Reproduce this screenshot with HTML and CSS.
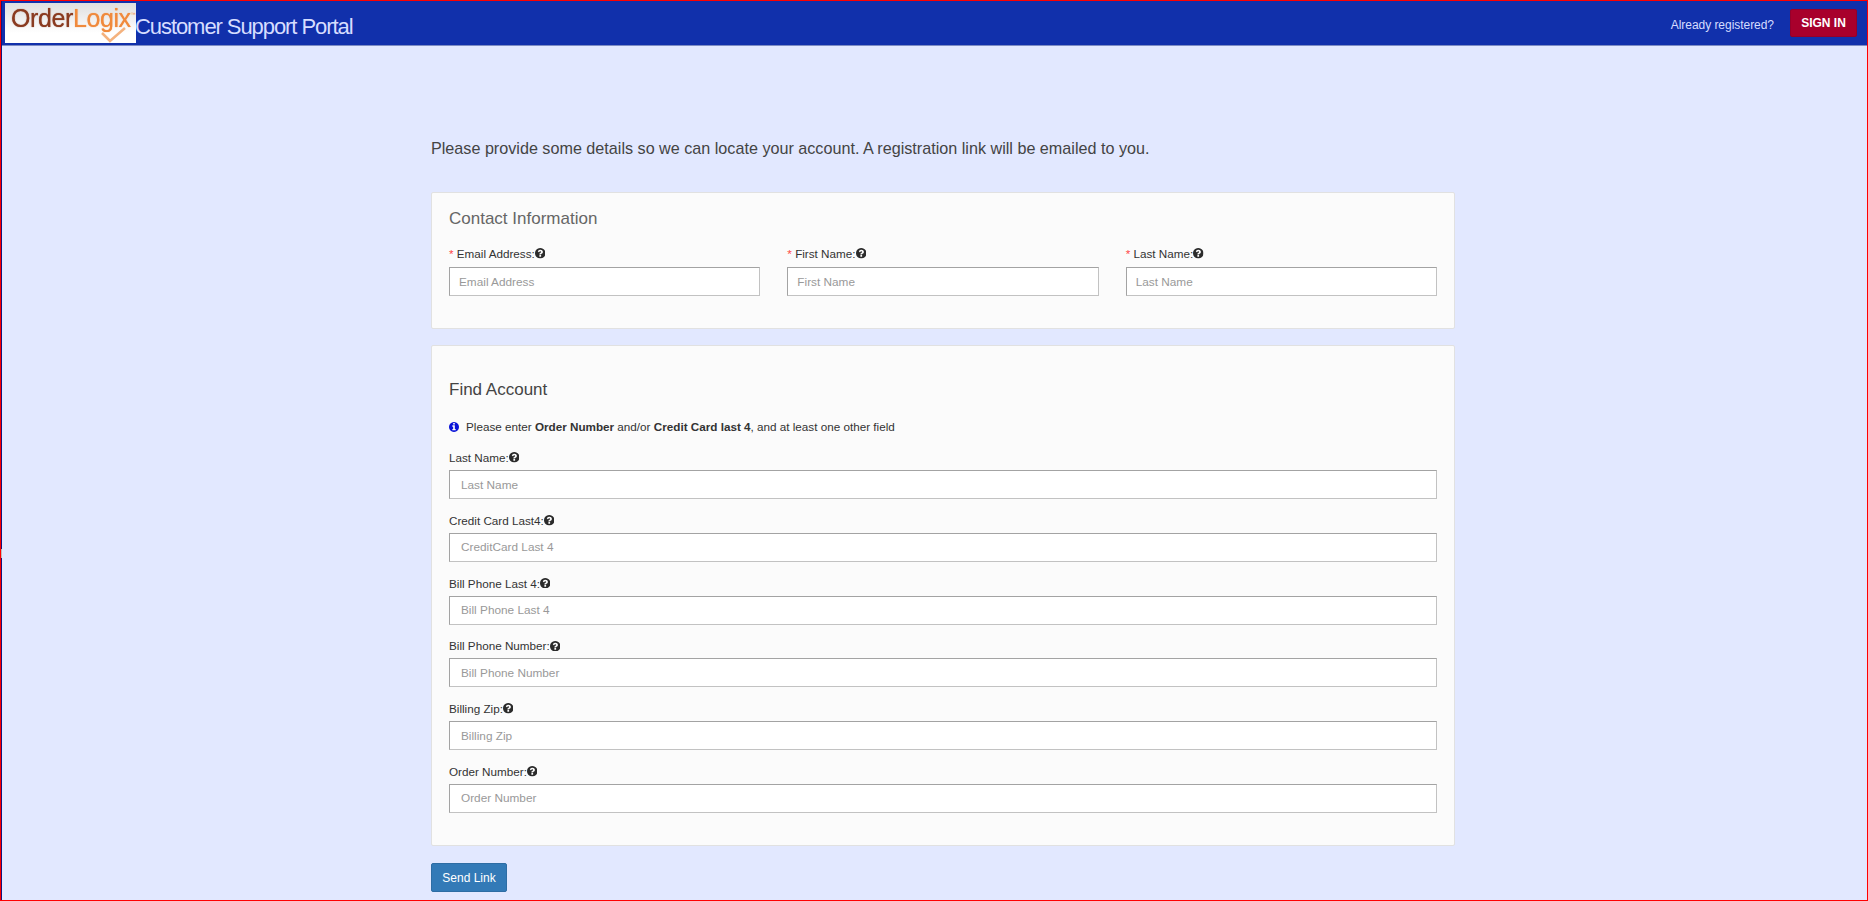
FILE: index.html
```html
<!DOCTYPE html>
<html lang="en">
<head>
<meta charset="utf-8">
<title>Customer Support Portal</title>
<link rel="stylesheet" href="styles.css">
</head>
<body>
<svg class="defs" width="0" height="0" aria-hidden="true">
  <symbol id="q" viewBox="128 128 1536 1536"><path d="M1024 1376v-192q0-14-9-23t-23-9h-192q-14 0-23 9t-9 23v192q0 14 9 23t23 9h192q14 0 23-9t9-23zm256-672q0-88-55.500-163t-138.500-116-170-41q-243 0-371 213-15 24 8 42l132 100q7 6 19 6 16 0 25-12 53-68 86-92 34-24 86-24 48 0 85.500 26t37.500 59q0 38-20 61t-68 45q-63 28-115.500 86.500t-52.500 125.500v36q0 14 9 23t23 9h192q14 0 23-9t9-23q0-19 21.500-49.500t54.500-49.500q32-18 49-28.500t46-35 44.500-48 28-60.500 12.500-81zm384 192q0 209-103 385.500t-279.500 279.500-385.500 103-385.500-103-279.500-279.500-103-385.500 103-385.500 279.500-279.500 385.500-103 385.500 103 279.500 279.500 103 385.500z"/></symbol>
  <symbol id="i" viewBox="128 128 1536 1536"><path d="M1152 1376v-160q0-14-9-23t-23-9h-96v-512q0-14-9-23t-23-9h-320q-14 0-23 9t-9 23v160q0 14 9 23t23 9h96v320h-96q-14 0-23 9t-9 23v160q0 14 9 23t23 9h448q14 0 23-9t9-23zm-128-896v-160q0-14-9-23t-23-9h-192q-14 0-23 9t-9 23v160q0 14 9 23t23 9h192q14 0 23-9t9-23zm640 416q0 209-103 385.500t-279.500 279.500-385.500 103-385.500-103-279.500-279.500-103-385.500 103-385.500 279.500-279.500 385.500-103 385.500 103 279.500 279.500 103 385.500z"/></symbol>
</svg>
<div class="frame">
  <header class="topbar">
    <div class="brand">
      <div class="logo"><span class="logo-order">Order</span><span class="logo-logix">Logix</span><sup class="logo-tm">™</sup>
        <svg class="logo-check" viewBox="0 0 30 18" aria-hidden="true"><path d="M3 8 L11 16 L26 3" fill="none" stroke="#f4b27e" stroke-width="2.500"/></svg>
      </div>
      <span class="portal-title">Customer Support Portal</span>
    </div>
    <div class="account">
      <span class="account-text">Already registered?</span>
      <a class="signin" href="#">SIGN IN</a>
    </div>
  </header>
  <main class="content">
    <p class="intro">Please provide some details so we can locate your account. A registration link will be emailed to you.</p>
    <section class="card card-contact">
      <h2 class="card-title card-title-muted">Contact Information</h2>
      <div class="three-col">
        <div class="field"><label class="label"><span class="req">*</span> Email Address:<svg class="help"><use href="#q"/></svg></label><input class="input" placeholder="Email Address"></div>
        <div class="field"><label class="label"><span class="req">*</span> First Name:<svg class="help"><use href="#q"/></svg></label><input class="input" placeholder="First Name"></div>
        <div class="field"><label class="label"><span class="req">*</span> Last Name:<svg class="help"><use href="#q"/></svg></label><input class="input" placeholder="Last Name"></div>
      </div>
    </section>
    <section class="card card-find">
      <h2 class="card-title">Find Account</h2>
      <p class="note"><svg class="info"><use href="#i"/></svg>Please enter <b>Order Number</b> and/or <b>Credit Card last 4</b>, and at least one other field</p>
      <div class="stack">
        <div class="field"><label class="label">Last Name:<svg class="help"><use href="#q"/></svg></label><input class="input input-wide" placeholder="Last Name"></div>
        <div class="field"><label class="label">Credit Card Last4:<svg class="help"><use href="#q"/></svg></label><input class="input input-wide" placeholder="CreditCard Last 4"></div>
        <div class="field"><label class="label">Bill Phone Last 4:<svg class="help"><use href="#q"/></svg></label><input class="input input-wide" placeholder="Bill Phone Last 4"></div>
        <div class="field"><label class="label">Bill Phone Number:<svg class="help"><use href="#q"/></svg></label><input class="input input-wide" placeholder="Bill Phone Number"></div>
        <div class="field"><label class="label">Billing Zip:<svg class="help"><use href="#q"/></svg></label><input class="input input-wide" placeholder="Billing Zip"></div>
        <div class="field"><label class="label">Order Number:<svg class="help"><use href="#q"/></svg></label><input class="input input-wide" placeholder="Order Number"></div>
      </div>
    </section>
    <button class="send" type="button">Send Link</button>
  </main>
</div>
</body>
</html>
```
FILE: styles.css
```css
* { box-sizing: border-box; }
html, body { margin: 0; height: 100%; overflow: hidden; }
body { font-family: "Liberation Sans", Arial, sans-serif; font-size: 11.700px; color: #333; }
.defs { position: absolute; width: 0; height: 0; }
.frame {
  position: relative;
  height: 100vh;
  background: #e2e8ff;
  border: 1px solid #f00;
  padding-left: 1px;
  box-shadow: inset 1px 0 0 #14147e;
  overflow: hidden;
}
.frame::before {
  content: "";
  position: absolute;
  left: 0;
  top: 548px;
  width: 1px;
  height: 9px;
  background: #bdbdbd;
}
.topbar {
  height: 45px;
  background: #1130ab;
  border-bottom: 1px solid #7d8cc4;
  display: flex;
  justify-content: space-between;
  align-items: flex-start;
  padding-left: 3px;
}
.brand { display: flex; align-items: flex-start; margin-top: 2px; }
.logo {
  width: 131px;
  height: 40px;
  background: linear-gradient(#dedede, #fff 75%);
  display: flex;
  align-items: baseline;
  padding: 0 0 0 6px;
  font-size: 25px;
  line-height: 30px;
  letter-spacing: -0.4px;
  position: relative;
}
.logo-order { color: #8a3b20; filter: blur(0.4px); text-shadow: 0 0 1px #8a3b20; }
.logo-logix { color: #f08a3c; filter: blur(0.4px); text-shadow: 0 0 1px #f08a3c; }
.logo-tm { font-size: 5px; color: #f08a3c; line-height: 1; align-self: flex-start; margin-top: 9px; }
.logo-check { position: absolute; left: 94px; top: 22px; width: 30px; height: 18px; }
.portal-title {
  color: #d6ddff;
  font-size: 22px;
  letter-spacing: -1.07px;
  line-height: 24px;
  margin: 12px 0 0 -1px;
}
.account { display: flex; align-items: flex-start; margin-top: 8px; padding-right: 10px; }
.account-text { color: #d6ddff; font-size: 12px; margin: 9px 16px 0 0; letter-spacing: -0.04px; }
.signin {
  width: 67px;
  height: 28px;
  background: #a8002c;
  border: 1px solid #95002a;
  border-radius: 2px;
  color: #fff;
  font-weight: bold;
  font-size: 12px;
  line-height: 26px;
  text-align: center;
  text-decoration: none;
}
.content { width: 1024px; margin-left: 429px; }
.intro { margin: 91px 0 0; font-size: 16.160px; line-height: 22px; color: #444; }
.card { background: #fbfbfb; border: 1px solid #e1e1e1; border-radius: 2px; padding: 0 17px; }
.card-contact { height: 137px; margin-top: 33px; padding-top: 16px; }
.card-find { height: 501px; margin-top: 16px; padding-top: 34px; }
.card-title { margin: 0; font-size: 17px; font-weight: normal; line-height: 20px; color: #444; }
.card-title-muted { color: #666; }
.three-col { display: grid; grid-template-columns: repeat(3, 1fr); column-gap: 27px; margin-top: 16px; }
.label { display: flex; align-items: center; height: 17px; margin-bottom: 4px; white-space: pre; color: #333; }
.three-col .label { margin-bottom: 5px; }
.req { color: #f44; }
.help { width: 10.500px; height: 10.500px; fill: #2b2b2b; }
.input {
  display: block;
  width: 100%;
  height: 29px;
  padding: 0 9px;
  font: 11.800px "Liberation Sans", Arial, sans-serif;
  background: #fff;
  border: 1px solid #c2c2c2;
  border-top-color: #a3a3a3;
  border-left-color: #a3a3a3;
  border-radius: 0;
  outline: 0;
}
.input::placeholder { color: #999; opacity: 1; }
.input-wide { padding: 0 11px; }
.note { display: flex; align-items: center; white-space: pre; margin: 18px 0 0; height: 17px; }
.note b { font-weight: bold; }
.info { width: 10px; height: 10px; margin-right: 7px; fill: #0a14d8; }
.stack { display: grid; row-gap: 12.800px; margin-top: 14px; }
.send {
  display: block;
  width: 76px;
  height: 29px;
  margin-top: 17px;
  padding: 0;
  background: #337ab7;
  border: 1px solid #2e6da4;
  border-radius: 2px;
  color: #fff;
  font: 12px "Liberation Sans", Arial, sans-serif;
}
```
